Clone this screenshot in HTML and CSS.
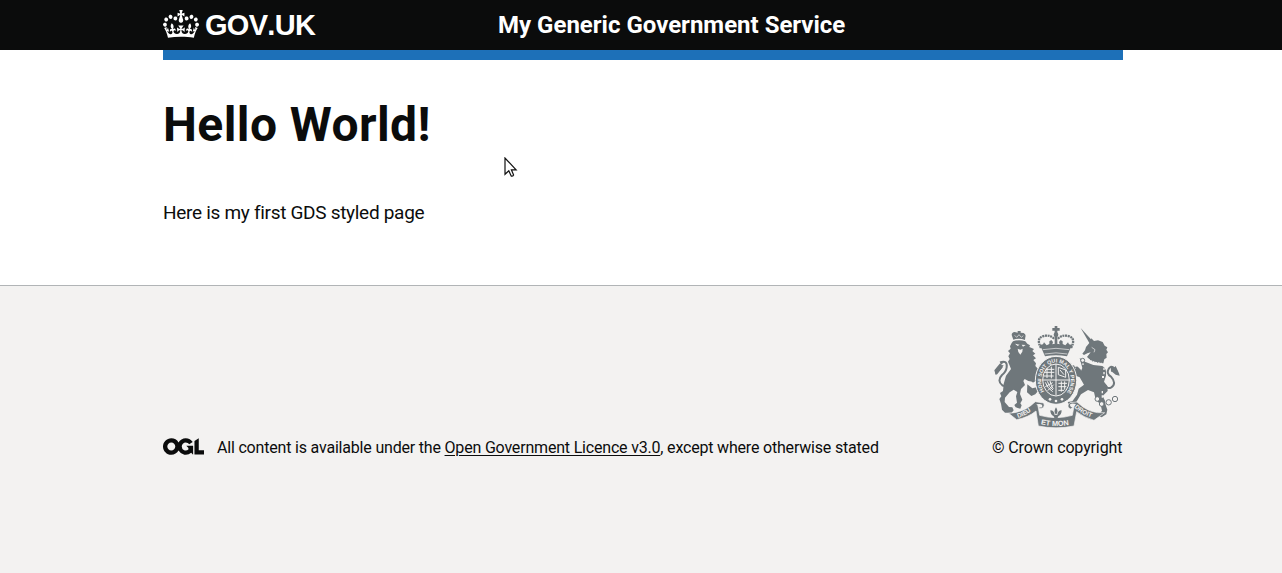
FILE: index.html
```html
<!DOCTYPE html>
<html lang="en">
<head>
<meta charset="utf-8">
<title>My Generic Government Service</title>
<link rel="stylesheet" href="styles.css">
</head>
<body>
<header class="header">
  <div class="header-inner">
    <a class="logo" href="#">
      <svg class="crown" viewBox="0 0 132 97" width="36" height="28" preserveAspectRatio="none" aria-hidden="true"><path fill="currentColor" fill-rule="evenodd" d="M25 30.2c3.5 1.5 7.7-.2 9.1-3.7 1.5-3.6-.2-7.8-3.9-9.2-3.6-1.4-7.6.3-9.1 3.9-1.4 3.5.3 7.5 3.9 9zM9 39.5c3.6 1.5 7.8-.2 9.2-3.7 1.5-3.6-.2-7.8-3.9-9.1-3.6-1.5-7.6.2-9.1 3.8-1.4 3.5.3 7.5 3.8 9zM4.4 57.2c3.5 1.5 7.7-.2 9.1-3.8 1.5-3.6-.2-7.7-3.9-9.1-3.5-1.5-7.6.3-9.1 3.8-1.4 3.5.3 7.6 3.9 9.1zm38.3-21.4c3.5 1.5 7.7-.2 9.1-3.8 1.5-3.6-.2-7.7-3.9-9.1-3.6-1.5-7.6.3-9.1 3.8-1.3 3.6.4 7.7 3.9 9.1zm64.4-5.6c-3.6 1.5-7.8-.2-9.1-3.7-1.5-3.6.2-7.8 3.8-9.2 3.6-1.4 7.7.3 9.2 3.9 1.3 3.5-.4 7.5-3.9 9zm15.9 9.3c-3.6 1.5-7.7-.2-9.1-3.7-1.5-3.6.2-7.8 3.7-9.1 3.6-1.5 7.7.2 9.2 3.8 1.5 3.5-.3 7.5-3.8 9zm4.7 17.7c-3.6 1.5-7.8-.2-9.2-3.8-1.5-3.6.2-7.7 3.9-9.1 3.6-1.5 7.7.3 9.2 3.8 1.3 3.5-.4 7.6-3.9 9.1zM89.3 35.8c-3.6 1.5-7.8-.2-9.2-3.8-1.4-3.6.2-7.7 3.9-9.1 3.6-1.5 7.7.3 9.2 3.8 1.4 3.6-.3 7.7-3.9 9.1zM69.7 17.7l8.9 4.7V9.3l-8.9 2.8c-.2-.3-.5-.6-.9-.9L72.4 0H59.6l3.5 11.2c-.3.3-.6.5-.9.9l-8.8-2.8v13.1l8.8-4.7c.3.3.6.7.9.9l-5 15.4v.1c-.2.8-.4 1.6-.4 2.4 0 4.1 3.1 7.5 7 8.1h.2c.3 0 .7.1 1 .1.4 0 .7 0 1-.1h.2c4-.6 7.1-4.1 7.1-8.1 0-.8-.1-1.7-.4-2.4V34l-5.1-15.4c.4-.2.7-.6 1-.9zM66 92.8c16.9 0 32.8 1.1 47.1 3.2 4-16.9 8.9-26.7 14-33.5l-9.6-3.4c1 4.9 1.1 7.2 0 10.2-1.5-1.4-3-4.3-4.2-8.7L108.6 76c2.8-2 5-3.2 7.5-3.3-4.4 9.4-10 11.9-13.6 11.2-4.3-.8-6.3-4.6-5.6-7.9 1-4.7 5.7-5.9 8-.5 4.3-8.7-3-11.4-7.6-8.8 7.1-7.2 7.9-13.5 2.1-21.1-8 6.1-8.1 12.3-4.5 20.8-4.7-5.4-12.1-2.5-9.5 6.2 3.4-5.2 7.9-2 7.2 3.1-.6 4.3-6.4 7.8-13.5 7.2-10.3-.9-10.9-8-11.2-13.8 2.5-.5 7.1 1.8 11 7.3L80.2 60c-4.1 4.4-8 5.3-12.3 5.4 1.4-4.4 8-11.6 8-11.6H55.5s6.4 7.2 7.9 11.6c-4.2-.1-8-1-12.3-5.4l1.4 16.4c3.9-5.5 8.5-7.7 10.9-7.3-.3 5.8-.9 12.8-11.1 13.8-7.2.6-12.9-2.9-13.5-7.2-.7-5 3.8-8.3 7.1-3.1 2.7-8.7-4.6-11.6-9.4-6.2 3.7-8.5 3.6-14.7-4.6-20.8-5.8 7.6-5 13.9 2.2 21.1-4.7-2.6-11.9.1-7.7 8.8 2.3-5.5 7.1-4.2 8.1.5.7 3.3-1.3 7.1-5.7 7.9-3.5.7-9-1.8-13.5-11.2 2.5.1 4.7 1.3 7.5 3.3l-4.7-15.4c-1.2 4.4-2.7 7.2-4.3 8.7-1.1-3-.9-5.3 0-10.2l-9.5 3.4c5 6.9 9.9 16.7 14 33.5 14.8-2.1 30.8-3.2 47.7-3.2z"/></svg>
      <span class="logo-text">GOV.UK</span>
    </a>
    <a class="service" href="#">My Generic Government Service</a>
  </div>
</header>
<main class="main">
  <h1 class="title">Hello World!</h1>
  <p class="body">Here is my first GDS styled page</p>
</main>
<footer class="footer">
  <div class="footer-inner">
    <div class="licence">
      <svg class="ogl" viewBox="0 0 483.2 195.7" width="41" height="17" aria-hidden="true"><path fill="currentColor" d="M421.5 142.8V.1l-50.7 32.3v161.1h112.4v-50.7zm-122.3-9.6A47.12 47.12 0 0 1 221 97.8c0-26 21.1-47.1 47.1-47.1 16.7 0 31.4 8.7 39.7 21.8l42.7-27.2A97.63 97.63 0 0 0 268.1 0c-36.5 0-68.3 20.1-85.1 49.7A98 98 0 0 0 97.8 0C43.9 0 0 43.9 0 97.8s43.9 97.8 97.8 97.8c36.5 0 68.3-20.1 85.1-49.7a97.76 97.76 0 0 0 149.6 25.4l19.4 22.2h3V87.8h-80l24.3 27.5zM97.8 145c-26 0-47.1-21.1-47.1-47.1s21.1-47.1 47.1-47.1 47.1 21.1 47.1 47.1S123.8 145 97.8 145"/></svg>
      <span class="licence-text">All content is available under the <a class="link" href="#">Open Government Licence v3.0</a>, except where otherwise stated</span>
    </div>
    <a class="copyright" href="#">
      <svg class="arms" viewBox="36 15 390 315" width="130" height="105" aria-hidden="true">
        <defs>
          <path id="ring" d="M193 214A44 54 0 1 1 263 214"/>
          <path id="left" d="M114 294Q143 286 166 261"/>
          <path id="mid" d="M182 313Q228 323 275 313"/>
          <path id="right" d="M283 262Q312 289 348 296"/>
        </defs>
        <!-- imperial crown -->
        <g class="ink">
          <path d="M224 18h8v6h7v8h-7v8h-8v-8h-7v-8h7z"/>
          <circle cx="228" cy="44" r="7"/>
          <path d="M224 46h8v24h-8z"/>
          <path d="M184 84l-5-9 10-2 3-6 8 9 8-4v-8l6-4 5 6-2 7 7-2 4-7 4 7 7 2-2-7 5-6 6 4v8l8 4 8-9 3 6 10 2-5 9-11 25q-33-7-66 0z"/>
        </g>
        <path class="bead" d="M183 84Q168 56 188 49Q209 42 223 57M273 84Q288 56 268 49Q247 42 233 57"/>
        <path class="paper-line thin" d="M188 89Q228 81 268 89M194 102Q228 95 262 102"/>
        <!-- lion -->
        <g class="ink">
          <path d="M100 59l-5-14q0-8 9-9l9 2v-5h9v5l9 1q8 4 5 12l-1 9q-17-7-35-1z"/>
          <path d="M99 64q18-6 37 0l6 7 8 5-2 5 14 6-5 6 9 8-7 5 9 9-8 5 8 10-2 8 12 13-9 8 2 18-9 9-17-3-11-6-4 6 5 12-12 12-3 15 7 17-6 11 4 6-4 10-14-4-4-7 8-7-3-19 4-13-11-7-12 8-14 16-1 13 13 15 10 1 4 9-6 7h-20l-9-9-3-18-5-14 6-8-4-10 9-6 2-21 7-25 15-20-5-13-4-9 5-8-4-8 5-9-6-7 8-7-2-7 5-10z"/>
          <path d="M150 151l21 13 15 9-5 12-15-3-7 6-8-9zM142 193l15 12 16-4 3 10-10 12-12 5-13-11z"/>
          <path d="M47 165l-4-14 16-20 14-6-10 10 8 1-11 15z"/>
        </g>
        <path class="paper-line thin" d="M104 46l6 6 7-8 7 8 6-5"/>
        <path class="tail" d="M48 162L66 140M60 127Q83 119 80 142Q78 156 66 165Q50 182 67 196Q76 201 86 188"/>
        <path class="paper" d="M105 71l14 3-6 4zM125 74l12 1-8 5zM113 86l8 3 7-3-1 9-6 9-6-8z"/>
        <!-- unicorn -->
        <g class="ink">
          <path d="M302 24l39 43-9 9z"/>
          <path d="M315 91l3-10 10-12 6-14 8 8 12-2 14 5 6 11 8 5-3 7 5 8-5 5 1 11-7 5-3 12-17-1-19-5-13-13 11-14-10 3-10 5-5-4z"/>
          <path d="M299 114q9 5 16 11l25 10 27 3q14 8 11 29l-6 18 10 13 1 15-15 15 7 14 2 13 5 14-3 14-14 9-11-5 12-15-4-18-15-16-5-21-18-7-21 13-10 16-9 15-17 0-4-8 14-2 14-20 5-18 16-12-13-22-17-7-11-14-1-14 12-1 6 12 15 5 4-9z"/>
          <path d="M304 151l-17 19-5 2-10-17 3-11 17-5z"/>
          <path d="M393 155l-1-18 10 6 5-5 10 22 2 7-12-3-11-9z"/>
        </g>
        <path class="tail" d="M411 156Q398 132 387 145Q377 161 393 170Q411 190 394 202Q382 209 375 195"/>
        <path class="collar" d="M317 114l11 8 17 7 20 3"/>
        <path class="chain" d="M309 117v18M294 133l-8 12M372 143v30M367 213v24"/>
        <g class="links"><circle cx="352" cy="237" r="7"/><circle cx="365" cy="252" r="7"/><circle cx="386" cy="247" r="8"/><circle cx="405" cy="237" r="8"/><circle cx="308" cy="121" r="6"/><circle cx="369" cy="171" r="5"/></g>
        <path class="paper-line thin" d="M335 82l10 7-3 8"/>
        <!-- motto scroll -->
        <path class="scroll" d="M86 280Q133 278 166 245L191 249Q197 264 180 266L174 258 179 286Q228 300 277 286L282 259 271 267Q257 259 270 248L291 246Q328 283 374 278L342 301Q309 291 290 275L282 318Q228 329 175 318L168 273Q145 292 110 299Z"/>
        <path class="paper-fill" d="M169 253q17-4 18 4t-10 5M288 252q-19-4-18 4t12 5"/>
        <!-- shield and garter -->
        <ellipse class="garter" cx="228" cy="181" rx="62" ry="72"/>
        <ellipse class="shield" cx="228" cy="180" rx="40" ry="48"/>
        <path class="quarters" d="M228 132v94M188 180h80M197 148h26M194 157h29M192 168h29M201 144v30M214 140v35M235 142l22 8v22l-22-8zM240 150l12 14M235 190h26M235 200h24M235 211h17M244 184v31M254 184v25M196 187q7 19 22 28M202 184q6 19 17 26M210 183q4 18 10 23M196 200l22-12M203 212l18-18"/>
        <circle class="paper" cx="210" cy="238" r="4"/>
        <circle class="paper" cx="228" cy="243" r="4"/>
        <circle class="paper" cx="246" cy="238" r="4"/>
        <path class="paper" d="M206 268q22-14 44 0v22q-22 4-44 0z"/>
        <path class="ink" d="M228 262q-9 13 0 22q9-9 0-22zM211 271q12 0 13 14h8q1-14 13-14 0 13-10 18l-4 9-3-5-3 5-4-9q-10-5-10-18z"/>
        <text class="motto garter-text"><textPath href="#ring">HONI SOIT QUI MAL Y PENSE</textPath></text>
        <text class="motto"><textPath href="#left">DIEU</textPath></text>
        <text class="motto mid-text"><textPath href="#mid">ET MON</textPath></text>
        <text class="motto"><textPath href="#right">DROIT</textPath></text>
      </svg>
      <span class="copyright-text">© Crown copyright</span>
    </a>
  </div>
</footer>
<svg class="cursor" viewBox="0 0 14 22" width="14" height="22" aria-hidden="true"><path d="M1 1v16.3l3.8-3.5 2.4 5.3q1.6.4 2.4-1.2l-2.2-5.1h4.7z" fill="#fff" stroke="#111" stroke-width="1.2"/></svg>
</body>
</html>
```
FILE: styles.css
```css
* { box-sizing: border-box; }
body {
  margin: 0;
  height: 573px;
  display: flex;
  flex-direction: column;
  overflow: hidden;
  background: #fff;
  color: #0b0c0c;
  font-family: Roboto, "Noto Sans", sans-serif;
}
a { color: inherit; text-decoration: none; }
svg { display: block; flex: none; }
.header { background: #0b0c0c; color: #fff; height: 50px; }
.header-inner {
  width: 960px;
  height: 60px;
  margin-left: 163px;
  border-bottom: 10px solid #1d70b8;
  display: grid;
  grid-template-columns: 335px 1fr;
  align-items: center;
  white-space: nowrap;
}
.logo { display: flex; align-items: center; gap: 6px; padding-bottom: 2px; }
.logo-text {
  font: bold 29px/30px "Liberation Sans", Arial, sans-serif;
  font-kerning: none;
  letter-spacing: -0.7px;
  padding-top: 2px;
}
.service { font-size: 24px; line-height: 30px; font-weight: 700; }
.main { margin-left: 163px; width: 960px; height: 235px; padding-top: 50px; white-space: nowrap; }
.title { margin: 0 0 50px; font-size: 48px; line-height: 50px; font-weight: 700; letter-spacing: 0.42px; }
.body { margin: 0; font-size: 19px; line-height: 25px; letter-spacing: -0.3px; }
.footer { flex: 1; background: #f3f2f1; border-top: 1px solid #b1b4b6; }
.footer-inner {
  width: 960px;
  margin-left: 163px;
  padding-top: 39px;
  display: flex;
  justify-content: space-between;
  align-items: flex-end;
  font-size: 16px;
  line-height: 20px;
  white-space: nowrap;
}
.licence { display: flex; align-items: center; gap: 13px; }
.licence-text { letter-spacing: -0.19px; }
.ogl { margin-bottom: 3px; }
.link { text-decoration: underline; text-underline-offset: 2px; text-decoration-thickness: 1px; }
.copyright { width: 131px; display: flex; flex-direction: column; gap: 8px; }
.copyright-text { letter-spacing: -0.13px; }
.arms { overflow: visible; }
.ink { fill: #6f777b; }
.paper { fill: #f3f2f1; }
.bead { fill: none; stroke: #6f777b; stroke-width: 7; stroke-dasharray: 6 2; }
.paper-line { fill: none; stroke: #f3f2f1; stroke-width: 3; }
.thin { stroke-width: 2; }
.tail { fill: none; stroke: #6f777b; stroke-width: 6; }
.collar { fill: none; stroke: #f3f2f1; stroke-width: 7; stroke-dasharray: 6 2; }
.chain { fill: none; stroke: #f3f2f1; stroke-width: 4; stroke-dasharray: 7 6; }
.links { fill: #f3f2f1; stroke: #6f777b; stroke-width: 3; }
.scroll { fill: #6f777b; stroke: #f3f2f1; stroke-width: 2; }
.paper-fill { fill: #f3f2f1; }
.garter { fill: #6f777b; stroke: #f3f2f1; stroke-width: 3; }
.shield { fill: #6f777b; stroke: #f3f2f1; stroke-width: 3; }
.quarters { fill: none; stroke: #f3f2f1; stroke-width: 3; }
.motto { fill: #f3f2f1; font: bold 19px "Liberation Sans", Arial, sans-serif; }
.mid-text { font-size: 22px; }
.garter-text { font-size: 16px; }
.cursor { position: absolute; left: 504px; top: 157px; }
```
